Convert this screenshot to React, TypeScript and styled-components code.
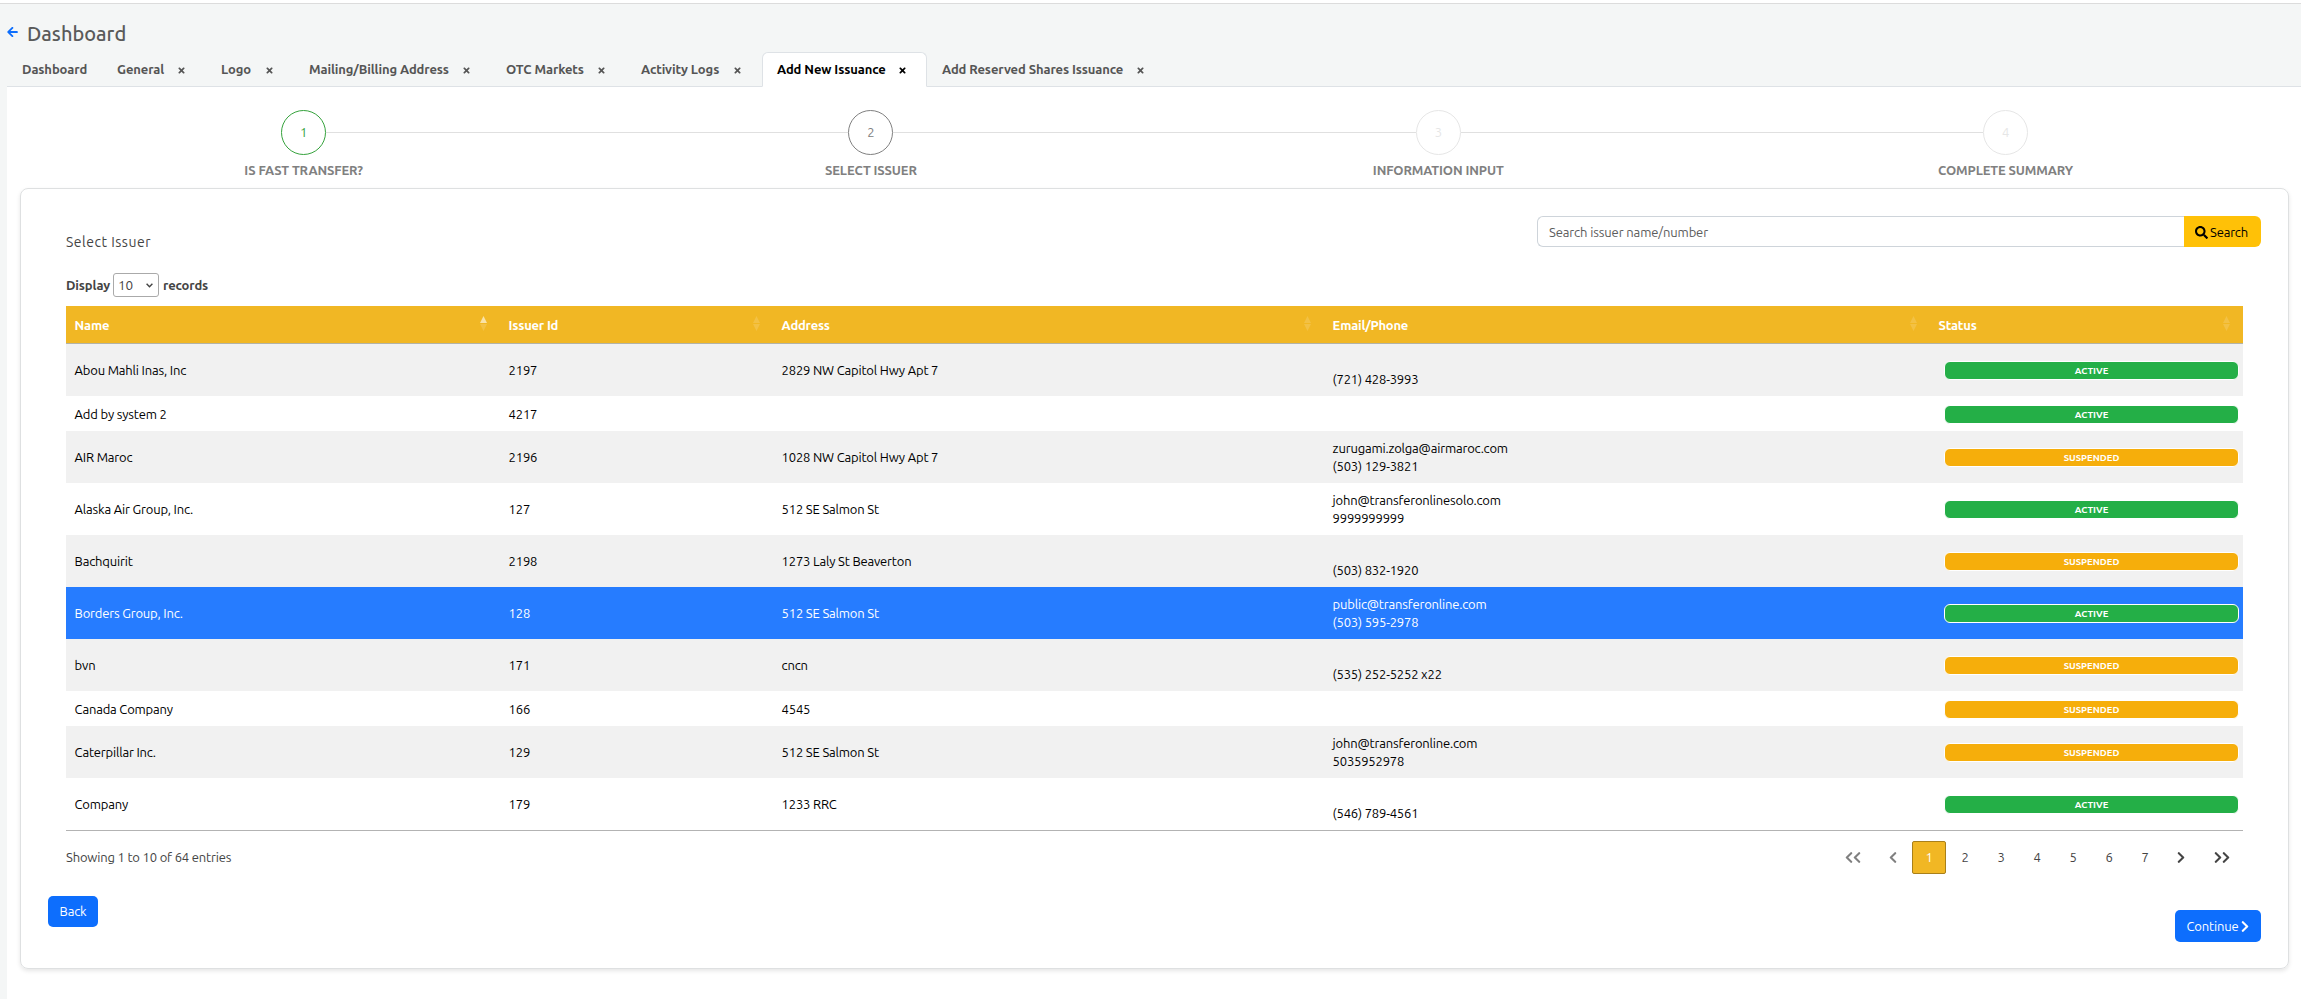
import React from "react";
import styled, { createGlobalStyle, css } from "styled-components";
import { FaArrowLeft, FaChevronLeft, FaChevronRight, FaSearch, FaTimes } from "react-icons/fa";

const Global = createGlobalStyle`
  *, *::before, *::after { box-sizing: border-box; }
  body {
    margin: 0;
    height: 999px;
    overflow: hidden;
    background: #f4f6f6;
    color: #444;
    font: 13px/18.2px Ubuntu, "Noto Sans", sans-serif;
    letter-spacing: -0.18px;
  }
  button, input, select { font: inherit; letter-spacing: inherit; }
`;

const Page = styled.div`
  display: flex;
  flex-direction: column;
  height: 999px;
`;
const TopStrip = styled.div`
  height: 4px;
  flex: none;
  background: #fff;
  border-bottom: 1px solid #dcdcdc;
`;
const Header = styled.header`
  display: flex;
  align-items: center;
  height: 48px;
  flex: none;
  padding: 11px 0 0 7px;
  svg { width: 11px; height: 12px; color: #0d6efd; margin-top: -4px; }
`;
const Title = styled.h1`
  margin: 0 0 0 9px;
  font-size: 20px;
  line-height: 28px;
  font-weight: 500;
  letter-spacing: 0;
  color: #5a5a5a;
`;
const Tabs = styled.nav`
  display: flex;
  height: 35px;
  flex: none;
  margin-left: 7px;
  border-bottom: 1px solid #dee2e6;
`;
const Tab = styled.a<{ $w: number; $active?: boolean }>`
  display: flex;
  align-items: center;
  justify-content: space-between;
  width: ${(p) => p.$w}px;
  height: 35px;
  padding: 0 20px 0 14px;
  border: 1px solid transparent;
  border-radius: 6px 6px 0 0;
  color: #555;
  font-weight: 700;
  letter-spacing: -0.1px;
  white-space: nowrap;
  svg { width: 7px; height: 9px; margin-top: 2px; }
  ${(p) => p.$active && css`
    background: #fff;
    color: #000;
    border-color: #dee2e6 #dee2e6 #fff;
  `}
`;
const Main = styled.main`
  flex: 1;
  margin-left: 7px;
  padding: 23px 12px 0 13px;
  background: #fff;
`;
const Steps = styled.ol`
  display: grid;
  grid-template-columns: repeat(4, 567.3px);
  margin: 0;
  padding: 0;
  height: 78px;
  list-style: none;
`;
const Step = styled.li`
  display: flex;
  flex-direction: column;
  align-items: center;
  font-weight: 700;
  letter-spacing: -0.12px;
  color: #808080;
`;
const StepRail = styled.div`
  display: flex;
  align-items: center;
  width: 100%;
  margin-bottom: 6px;
`;
const Rail = styled.span<{ $hidden?: boolean }>`
  flex: 1;
  height: 1px;
  background: ${(p) => (p.$hidden ? "transparent" : "#e0e0e0")};
`;
const StepCircle = styled.span<{ $color: string }>`
  display: flex;
  align-items: center;
  justify-content: center;
  width: 45px;
  height: 45px;
  border: 1px solid ${(p) => p.$color};
  border-radius: 50%;
  color: ${(p) => p.$color};
  font-size: 13px;
  font-weight: 400;
`;
const Card = styled.section`
  height: 781px;
  padding: 27px 27px 0;
  border: 1px solid #dee0e1;
  border-radius: 8px;
  box-shadow: 0 2px 4px rgba(0, 0, 0, 0.1);
`;
const CardTop = styled.div`
  display: flex;
  justify-content: space-between;
  height: 57px;
  padding-left: 18px;
`;
const CardTitle = styled.h2`
  margin: 16px 0 0;
  font-size: 14px;
  line-height: 20px;
  font-weight: 400;
  letter-spacing: 0.5px;
`;
const SearchGroup = styled.div`
  display: flex;
  width: 724px;
  height: 31px;
`;
const SearchInput = styled.input`
  flex: 1;
  min-width: 0;
  padding: 2px 11px 0;
  border: 1px solid #ced4da;
  border-right: 0;
  border-radius: 6px 0 0 6px;
  outline: 0;
  letter-spacing: -0.12px;
  &::placeholder { color: #5c5c5c; opacity: 1; }
`;
const SearchButton = styled.button`
  display: flex;
  align-items: center;
  gap: 2px;
  width: 77px;
  padding: 1px 0 0 11px;
  border: 0;
  border-radius: 0 6px 6px 0;
  background: #ffc107;
  color: #000;
  svg { width: 13px; height: 13px; }
`;
const DataArea = styled.div`
  width: 2177px;
  margin-left: 18px;
`;
const Display = styled.label`
  display: flex;
  align-items: center;
  height: 24px;
  margin-bottom: 9px;
  font-weight: 700;
  letter-spacing: -0.12px;
`;
const SizeBox = styled.span`
  display: flex;
  align-items: center;
  justify-content: space-between;
  width: 46px;
  height: 24px;
  margin: 0 4px 0 3px;
  padding: 0 5px 0 4px;
  border: 1px solid #aaa;
  border-radius: 3px;
  font-size: 13.5px;
  font-weight: 400;
  svg { width: 7px; height: 5px; }
`;
const Row = styled.div<{ $bg?: string; $short?: boolean; $selected?: boolean }>`
  display: grid;
  grid-template-columns: 434px 273px 551px 606px 313px;
  align-items: center;
  height: ${(p) => (p.$short ? 35 : 52)}px;
  background: ${(p) => (p.$selected ? "#267cff" : p.$bg)};
  color: ${(p) => (p.$selected ? "#fff" : "#000")};
`;
const HeadRow = styled(Row)`
  height: 38px;
  background: #f1b724;
  border-bottom: 1px solid #b3b3a6;
  color: #fff;
  font-weight: 700;
  letter-spacing: -0.2px;
`;
const HeadCell = styled.div`
  display: flex;
  align-items: center;
  justify-content: space-between;
  padding: 2px 13px 0 8.6px;
  svg { width: 7px; height: 15px; margin-top: -4px; }
`;
const Cell = styled.div<{ $contact?: boolean }>`
  padding: ${(p) => (p.$contact ? 0 : 1)}px 8.6px 0;
  white-space: pre;
`;
const Badge = styled.div<{ $suspended: boolean }>`
  height: 19px;
  margin: 1px 4px 0 14px;
  border: 1px solid #fff;
  border-radius: 6px;
  background: ${(p) => (p.$suspended ? "#f6ae0b" : "#24af47")};
  color: #fff;
  font-size: 9.5px;
  line-height: 17px;
  font-weight: 700;
  letter-spacing: 0;
  text-align: center;
`;
const TableFoot = styled.div`
  display: flex;
  justify-content: space-between;
  align-items: center;
  height: 53px;
  border-top: 1px solid #b3b3b3;
`;
const Pager = styled.div`
  display: flex;
  align-items: center;
  gap: 2px;
`;
const PageItem = styled.span<{ $w?: number; $active?: boolean; $muted?: boolean }>`
  display: flex;
  align-items: center;
  justify-content: center;
  width: ${(p) => p.$w || 34}px;
  height: 33px;
  border: 1px solid ${(p) => (p.$active ? "#a9801a" : "transparent")};
  border-radius: 2px;
  background: ${(p) => (p.$active ? "#f1b724" : "transparent")};
  color: ${(p) => (p.$active ? "#fff" : p.$muted ? "#808080" : "#444")};
  svg { width: 8px; height: 13px; }
`;
const Actions = styled.div`
  display: flex;
  justify-content: space-between;
  margin-top: 13px;
`;
const Action = styled.button<{ $w: number; $drop?: boolean }>`
  display: flex;
  align-items: center;
  justify-content: center;
  gap: 3px;
  width: ${(p) => p.$w}px;
  height: ${(p) => (p.$drop ? 32 : 31)}px;
  margin-top: ${(p) => (p.$drop ? 14 : 0)}px;
  padding: 0;
  border: 0;
  border-radius: 5px;
  background: #0d6efd;
  color: #fff;
  svg { width: 8px; height: 13px; }
`;

const TABS = [
  { label: "Dashboard", w: 95, fixed: true },
  { label: "General", w: 104 },
  { label: "Logo", w: 88 },
  { label: "Mailing/Billing Address", w: 197 },
  { label: "OTC Markets", w: 135 },
  { label: "Activity Logs", w: 136 },
  { label: "Add New Issuance", w: 165, active: true },
  { label: "Add Reserved Shares Issuance", w: 238 },
];

const STEPS = [
  { label: "IS FAST TRANSFER?", color: "#35a23c" },
  { label: "SELECT ISSUER", color: "#808080" },
  { label: "INFORMATION INPUT", color: "#e6e6e6" },
  { label: "COMPLETE SUMMARY", color: "#e6e6e6" },
];

type Issuer = [name: string, id: string, address: string, contact: string, suspended?: boolean];
const ISSUERS: Issuer[] = [
  ["Abou Mahli Inas, Inc", "2197", "2829 NW Capitol Hwy Apt 7", "\n(721) 428-3993"],
  ["Add by system 2", "4217", "", ""],
  ["AIR Maroc", "2196", "1028 NW Capitol Hwy Apt 7", "zurugami.zolga@airmaroc.com\n(503) 129-3821", true],
  ["Alaska Air Group, Inc.", "127", "512 SE Salmon St", "john@transferonlinesolo.com\n9999999999"],
  ["Bachquirit", "2198", "1273 Laly St Beaverton", "\n(503) 832-1920", true],
  ["Borders Group, Inc.", "128", "512 SE Salmon St", "public@transferonline.com\n(503) 595-2978"],
  ["bvn", "171", "cncn", "\n(535) 252-5252 x22", true],
  ["Canada Company", "166", "4545", "", true],
  ["Caterpillar Inc.", "129", "512 SE Salmon St", "john@transferonline.com\n5035952978", true],
  ["Company", "179", "1233 RRC", "\n(546) 789-4561"],
];
const SELECTED_ID = "128";

const SortIcon = ({ ascending }: { ascending?: boolean }) => (
  <svg viewBox="0 0 7 15" fill="#fff">
    <path d="M3.5 0L7 7H0z" opacity={ascending ? 0.6 : 0.15} />
    <path d="M0 8h7l-3.5 7z" opacity={0.15} />
  </svg>
);

export default function App() {
  return (
    <>
      <Global />
      <Page>
        <TopStrip />
        <Header>
          <FaArrowLeft />
          <Title>Dashboard</Title>
        </Header>
        <Tabs>
          {TABS.map((t) => (
            <Tab key={t.label} $w={t.w} $active={t.active}>
              {t.label}
              {!t.fixed && <FaTimes />}
            </Tab>
          ))}
        </Tabs>
        <Main>
          <Steps>
            {STEPS.map((s, i) => (
              <Step key={s.label}>
                <StepRail>
                  <Rail $hidden={i === 0} />
                  <StepCircle $color={s.color}>{i + 1}</StepCircle>
                  <Rail $hidden={i === 3} />
                </StepRail>
                {s.label}
              </Step>
            ))}
          </Steps>
          <Card>
            <CardTop>
              <CardTitle>Select Issuer</CardTitle>
              <SearchGroup>
                <SearchInput placeholder="Search issuer name/number" />
                <SearchButton><FaSearch />Search</SearchButton>
              </SearchGroup>
            </CardTop>
            <DataArea>
              <Display>
                Display
                <SizeBox>
                  10
                  <svg viewBox="0 0 7 5" fill="none" stroke="#444" strokeWidth="1.4"><path d="M.6.8l2.9 3 2.9-3" /></svg>
                </SizeBox>
                records
              </Display>
              <HeadRow>
                {["Name", "Issuer Id", "Address", "Email/Phone", "Status"].map((h, i) => (
                  <HeadCell key={h}>{h}<SortIcon ascending={i === 0} /></HeadCell>
                ))}
              </HeadRow>
              {ISSUERS.map(([name, id, address, contact, suspended], i) => (
                <Row key={id} $bg={i % 2 ? "#fff" : "#f1f1f1"} $short={!contact} $selected={id === SELECTED_ID}>
                  <Cell>{name}</Cell>
                  <Cell>{id}</Cell>
                  <Cell>{address}</Cell>
                  <Cell $contact>{contact}</Cell>
                  <Badge $suspended={!!suspended}>{suspended ? "SUSPENDED" : "ACTIVE"}</Badge>
                </Row>
              ))}
              <TableFoot>
                <span>Showing 1 to 10 of 64 entries</span>
                <Pager>
                  <PageItem $w={42} $muted><FaChevronLeft /><FaChevronLeft /></PageItem>
                  <PageItem $muted><FaChevronLeft /></PageItem>
                  <PageItem $active>1</PageItem>
                  {[2, 3, 4, 5, 6, 7].map((n) => <PageItem key={n}>{n}</PageItem>)}
                  <PageItem><FaChevronRight /></PageItem>
                  <PageItem $w={43}><FaChevronRight /><FaChevronRight /></PageItem>
                </Pager>
              </TableFoot>
            </DataArea>
            <Actions>
              <Action $w={50}>Back</Action>
              <Action $w={86} $drop>Continue<FaChevronRight /></Action>
            </Actions>
          </Card>
        </Main>
      </Page>
    </>
  );
}
